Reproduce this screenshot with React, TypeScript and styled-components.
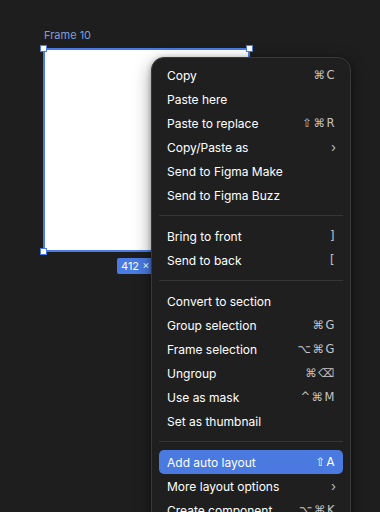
import React from 'react';
import styled, { createGlobalStyle } from 'styled-components';

const GlobalStyle = createGlobalStyle`
  html, body {
    margin: 0;
    padding: 0;
    background: #1e1e1e;
    overflow: hidden;
  }
  body {
    font-family: Inter, 'DejaVu Sans', sans-serif;
  }
`;

const Canvas = styled.div`
  position: relative;
  width: 380px;
  height: 512px;
  background: #1e1e1e;
  overflow: hidden;
`;

const FrameLabel = styled.div`
  position: absolute;
  left: 44px;
  top: 28px;
  font-size: 11px;
  line-height: 14px;
  color: #7c9fdc;
`;

const Frame = styled.div`
  position: absolute;
  left: 43px;
  top: 48px;
  width: 207px;
  height: 204px;
  box-sizing: border-box;
  background: #ffffff;
  border: 2px solid #4a7be2;
`;

const Handle = styled.div<{ $x: 'left' | 'right'; $y: 'top' | 'bottom' }>`
  position: absolute;
  width: 7px;
  height: 7px;
  box-sizing: border-box;
  background: #ffffff;
  border: 1px solid #4a7be2;
  ${p => (p.$x === 'left' ? 'left: -5px;' : 'right: -5px;')}
  ${p => (p.$y === 'top' ? 'top: -5px;' : 'bottom: -5px;')}
`;

const SizeBadge = styled.div`
  position: absolute;
  left: 117px;
  top: 258px;
  height: 16px;
  padding: 0 4px;
  border-radius: 2px;
  background: #4a7be2;
  color: #ffffff;
  font-size: 11px;
  line-height: 16px;
  white-space: nowrap;
`;

const Menu = styled.div`
  position: absolute;
  left: 151px;
  top: 57px;
  width: 200px;
  box-sizing: border-box;
  padding: 5px 7px 6px;
  background: #1f1f1f;
  border: 1px solid #383838;
  border-radius: 13px;
  box-shadow: 0 6px 18px rgba(0, 0, 0, 0.4), 0 1px 5px rgba(0, 0, 0, 0.3);
  display: flex;
  flex-direction: column;
  z-index: 2;
`;

const Row = styled.div<{ $active?: boolean }>`
  height: 24px;
  display: flex;
  align-items: center;
  justify-content: space-between;
  padding: 0 8px;
  border-radius: 5px;
  font-size: 12px;
  color: #ffffff;
  white-space: nowrap;
  background: ${p => (p.$active ? '#4a79e0' : 'transparent')};
`;

const Shortcut = styled.span<{ $active?: boolean }>`
  font-family: 'DejaVu Sans', Inter, sans-serif;
  font-size: 11.5px;
  letter-spacing: 1.5px;
  margin-right: -1px;
  color: ${p => (p.$active ? '#ffffff' : '#c4c4c4')};
`;

const Chevron = styled.span`
  font-size: 13px;
  color: #bdbdbd;
  margin-right: -1px;
`;

const Divider = styled.div`
  height: 1px;
  margin: 8px 0;
  background: #363636;
`;

type Item = { label: string; shortcut?: string; sub?: boolean; active?: boolean };

const groups: Item[][] = [
  [
    { label: 'Copy', shortcut: '⌘C' },
    { label: 'Paste here' },
    { label: 'Paste to replace', shortcut: '⇧⌘R' },
    { label: 'Copy/Paste as', sub: true },
    { label: 'Send to Figma Make' },
    { label: 'Send to Figma Buzz' },
  ],
  [
    { label: 'Bring to front', shortcut: ']' },
    { label: 'Send to back', shortcut: '[' },
  ],
  [
    { label: 'Convert to section' },
    { label: 'Group selection', shortcut: '⌘G' },
    { label: 'Frame selection', shortcut: '⌥⌘G' },
    { label: 'Ungroup', shortcut: '⌘⌫' },
    { label: 'Use as mask', shortcut: '^⌘M' },
    { label: 'Set as thumbnail' },
  ],
  [
    { label: 'Add auto layout', shortcut: '⇧A', active: true },
    { label: 'More layout options', sub: true },
    { label: 'Create component', shortcut: '⌥⌘K' },
  ],
];

export default function App() {
  return (
    <Canvas>
      <GlobalStyle />
      <FrameLabel>Frame 10</FrameLabel>
      <Frame>
        <Handle $x="left" $y="top" />
        <Handle $x="right" $y="top" />
        <Handle $x="left" $y="bottom" />
        <Handle $x="right" $y="bottom" />
      </Frame>
      <SizeBadge>412 × 412</SizeBadge>
      <Menu>
        {groups.map((group, gi) => (
          <React.Fragment key={gi}>
            {gi > 0 && <Divider />}
            {group.map(item => (
              <Row key={item.label} $active={item.active}>
                <span>{item.label}</span>
                {item.shortcut && <Shortcut $active={item.active}>{item.shortcut}</Shortcut>}
                {item.sub && <Chevron>›</Chevron>}
              </Row>
            ))}
          </React.Fragment>
        ))}
      </Menu>
    </Canvas>
  );
}
